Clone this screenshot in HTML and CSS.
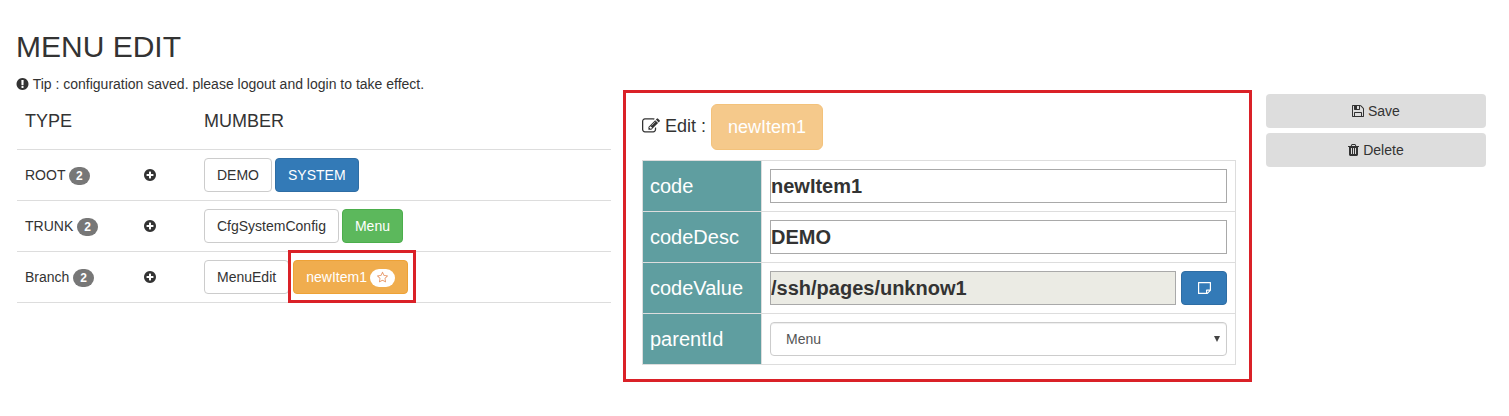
FILE: index.html
```html
<!DOCTYPE html>
<html lang="en">
<head>
<meta charset="utf-8">
<title>Menu Edit</title>
<link rel="stylesheet" href="styles.css">
</head>
<body>
<svg class="sprite" aria-hidden="true">
  <symbol id="alert" viewBox="128 0 1536 1792"><path d="M896 128q209 0 385.500 103t279.500 279.500 103 385.500-103 385.500-279.500 279.500-385.500 103-385.500-103-279.500-279.500-103-385.500 103-385.500 279.500-279.500 385.500-103zm128 1247v-190q0-14-9-23.500t-22-9.500h-192q-13 0-23 10t-10 23v190q0 13 10 23t23 10h192q13 0 22-9.500t9-23.500zm-2-344l18-621q0-12-10-18-10-8-24-8h-220q-14 0-24 8-10 6-10 18l17 621q0 10 10 17.500t24 7.500h185q14 0 23.500-7.500t10.500-17.500z"/></symbol>
  <symbol id="plus" viewBox="128 0 1536 1792"><path d="M1344 960v-128q0-26-19-45t-45-19h-256v-256q0-26-19-45t-45-19h-128q-26 0-45 19t-19 45v256h-256q-26 0-45 19t-19 45v128q0 26 19 45t45 19h256v256q0 26 19 45t45 19h128q26 0 45-19t19-45v-256h256q26 0 45-19t19-45zm320-64q0 209-103 385.500t-279.500 279.500-385.500 103-385.500-103-279.500-279.500-103-385.500 103-385.500 279.500-279.500 385.500-103 385.500 103 279.500 279.500 103 385.500z"/></symbol>
  <symbol id="edit" viewBox="0 0 1792 1792"><path d="M888 1184l116-116-152-152-116 116v56h96v96h56zm440-720q-16-16-33 1l-350 350q-17 17-1 33t33-1l350-350q17-17 1-33zm80 594v190q0 119-84.500 203.500t-203.500 84.500h-832q-119 0-203.500-84.500t-84.500-203.500v-832q0-119 84.500-203.500t203.500-84.500h832q63 0 117 25 15 7 18 23 3 17-9 29l-49 49q-14 14-32 8-23-6-45-6h-832q-66 0-113 47t-47 113v832q0 66 47 113t113 47h832q66 0 113-47t47-113v-126q0-13 9-22l64-64q15-15 35-7t20 29zm-96-738l288 288-672 672h-288v-288zm444 132l-92 92-288-288 92-92q28-28 68-28t68 28l152 152q28 28 28 68t-28 68z"/></symbol>
  <symbol id="save" viewBox="128 0 1536 1792"><path d="M512 1536h768v-384h-768v384zm896 0h128v-896q0-14-10-38.500t-20-34.500l-281-281q-10-10-34-20t-39-10v416q0 40-28 68t-68 28h-576q-40 0-68-28t-28-68v-416h-128v1280h128v-416q0-40 28-68t68-28h832q40 0 68 28t28 68v416zm-384-928v-320q0-13-9.500-22.500t-22.500-9.500h-192q-13 0-22.500 9.500t-9.500 22.500v320q0 13 9.500 22.500t22.500 9.500h192q13 0 22.500-9.500t9.500-22.500zm640 32v928q0 40-28 68t-68 28h-1344q-40 0-68-28t-28-68v-1344q0-40 28-68t68-28h928q40 0 88 20t76 48l280 280q28 28 48 76t20 88z"/></symbol>
  <symbol id="trash" viewBox="192 0 1408 1792"><path d="M704 1376v-704q0-14-9-23t-23-9h-64q-14 0-23 9t-9 23v704q0 14 9 23t23 9h64q14 0 23-9t9-23zm256 0v-704q0-14-9-23t-23-9h-64q-14 0-23 9t-9 23v704q0 14 9 23t23 9h64q14 0 23-9t9-23zm256 0v-704q0-14-9-23t-23-9h-64q-14 0-23 9t-9 23v704q0 14 9 23t23 9h64q14 0 23-9t9-23zm-544-992h448l-48-117q-7-9-17-11h-317q-10 2-17 11zm928 32v64q0 14-9 23t-23 9h-96v948q0 83-47 143.500t-113 60.500h-832q-66 0-113-58.500t-47-141.500v-952h-96q-14 0-23-9t-9-23v-64q0-14 9-23t23-9h309l70-167q15-37 54-63t79-26h320q40 0 79 26t54 63l70 167h309q14 0 23 9t9 23z"/></symbol>
  <symbol id="star" viewBox="64 0 1664 1792"><path d="M1201 1004l306-297-422-62-189-382-189 382-422 62 306 297-73 421 378-199 377 199zm527-357q0 22-26 48l-363 354 86 500q1 7 1 20 0 50-41 50-19 0-40-12l-449-236-449 236q-22 12-40 12-21 0-31.500-14.500t-10.500-35.500q0-6 2-20l86-500-364-354q-25-27-25-48 0-37 56-46l502-73 225-455q19-41 49-41t49 41l225 455 502 73q56 9 56 46z"/></symbol>
  <symbol id="note" viewBox="0 0 13 12"><path fill-rule="evenodd" d="M.5 0h12q.5 0 .5.500v8L9.500 12h-9q-.5 0-.5-.5v-11q0-.5.500-.5zM1.200 1.200v9.600H8V8.200q0-.7.700-.7h3.100V1.200zM9.200 8.700v2l2-2z"/></symbol>
</svg>
<div class="page">
  <section class="menus">
    <h2 class="title">MENU EDIT</h2>
    <p class="tip"><svg class="icon alert"><use href="#alert"/></svg> Tip : configuration saved. please logout and login to take effect.</p>
    <div class="row head"><div>TYPE</div><div></div><div>MUMBER</div></div>
    <div class="row">
      <div>ROOT <span class="badge">2</span></div>
      <div><svg class="icon"><use href="#plus"/></svg></div>
      <div class="members"><button class="btn">DEMO</button><button class="btn primary">SYSTEM</button></div>
    </div>
    <div class="row">
      <div>TRUNK <span class="badge">2</span></div>
      <div><svg class="icon"><use href="#plus"/></svg></div>
      <div class="members"><button class="btn">CfgSystemConfig</button><button class="btn success">Menu</button></div>
    </div>
    <div class="row last">
      <div>Branch <span class="badge">2</span></div>
      <div><svg class="icon"><use href="#plus"/></svg></div>
      <div class="members"><button class="btn">MenuEdit</button><span class="marked"><button class="btn warning">newItem1<span class="badge light"><svg class="icon star"><use href="#star"/></svg></span></button></span></div>
    </div>
  </section>
  <section class="editor">
    <div class="heading"><svg class="icon wide"><use href="#edit"/></svg> Edit : <button class="btn warning large">newItem1</button></div>
    <div class="form">
      <label class="label" for="code">code</label>
      <div class="field"><input class="input" id="code" value="newItem1"></div>
      <label class="label" for="desc">codeDesc</label>
      <div class="field"><input class="input" id="desc" value="DEMO"></div>
      <label class="label" for="value">codeValue</label>
      <div class="field"><input class="input readonly" id="value" value="/ssh/pages/unknow1" readonly><button class="btn primary pick" aria-label="Choose page"><svg class="note"><use href="#note"/></svg></button></div>
      <div class="label">parentId</div>
      <div class="field"><div class="select">Menu<svg class="caret" viewBox="0 0 6 6"><path d="M0 0h6L3 6z"/></svg></div></div>
    </div>
  </section>
  <aside class="actions">
    <button class="action"><svg class="icon"><use href="#save"/></svg> Save</button>
    <button class="action"><svg class="icon trash"><use href="#trash"/></svg> Delete</button>
  </aside>
</div>
</body>
</html>
```
FILE: styles.css
```css
*, *::before, *::after { box-sizing: border-box; }
body {
  margin: 0;
  background: #fff;
  color: #333;
  font: 14px/20px "Liberation Sans", Arial, sans-serif;
}
button, input { font-family: inherit; }
.sprite { display: none; }
.icon {
  display: inline-block;
  width: 12px;
  height: 14px;
  fill: currentColor;
  vertical-align: -2px;
}
.page {
  display: grid;
  grid-template-columns: 594px 629px 222px;
  column-gap: 12px;
  align-items: start;
  height: 416px;
  padding-left: 17px;
}
.page > .actions { margin-left: 2px; }

.title { margin: 30px 0 11px -1px; font-size: 30px; line-height: 33px; font-weight: 400; }
.tip { margin: 0 0 0 -1px; height: 27px; }
.icon.alert { width: 13px; }
.row {
  display: grid;
  grid-template-columns: 119px 60px 1fr;
  align-items: center;
  height: 51px;
  border-top: 1px solid #ddd;
}
.row > div { padding: 0 8px; white-space: nowrap; }
.row > .members { display: flex; gap: 3px; }
.row.head { height: 48px; border-top: 0; font-size: 18px; padding-bottom: 9px; }
.row.last { height: 52px; border-bottom: 1px solid #ddd; }
.row.last > .members { gap: 4px; }

.badge {
  display: inline-block;
  padding: 3px 7px;
  border-radius: 10px;
  background: #777;
  color: #fff;
  font-size: 12px;
  line-height: 12px;
  font-weight: 700;
  vertical-align: baseline;
}
.badge.light { background: #fff; height: 18px; padding: 2px 7px; margin-left: 3px; vertical-align: middle; }
.icon.star { width: 11px; height: 13px; fill: #e8996b; vertical-align: top; }
.btn {
  height: 34px;
  padding: 6px 12px;
  border: 1px solid #ccc;
  border-radius: 4px;
  background: #fff;
  color: #333;
  font-size: 14px;
  line-height: 20px;
  vertical-align: middle;
}
.btn.primary { background: #337ab7; border-color: #2e6da4; color: #fff; }
.btn.success { background: #5cb85c; border-color: #4cae4c; color: #fff; }
.btn.warning { background: #f0ad4e; border-color: #eea236; color: #fff; }
.btn.large {
  height: 46px;
  padding: 10px 16px;
  border-radius: 6px;
  font-size: 18px;
  line-height: 24px;
  opacity: .65;
}
.marked { position: relative; }
.marked .btn { display: block; width: 115px; padding: 6px 11px; }
.marked::after {
  content: "";
  position: absolute;
  left: -5px;
  right: -8px;
  top: -10px;
  height: 53px;
  border: 3px solid #da2128;
  pointer-events: none;
}

.editor {
  margin-top: 90px;
  height: 292px;
  padding: 10px 13px 0 16px;
  border: 3px solid #da2128;
}
.heading { height: 57px; font-size: 18px; line-height: 46px; white-space: nowrap; }
.icon.wide { width: 18px; height: 18px; vertical-align: -3px; }
.form {
  display: grid;
  grid-template-columns: 118px 1fr;
  gap: 1px;
  padding: 1px;
  background: #ddd;
}
.label {
  height: 50px;
  padding: 0 7px;
  background: #5f9ea0;
  color: #fff;
  font-size: 20px;
  line-height: 50px;
}
.field { display: flex; gap: 5px; padding: 8px; background: #fff; }
.input {
  flex: 1;
  min-width: 0;
  height: 34px;
  padding: 1px 1px 1px 0;
  border: 1px solid #a9a9a9;
  color: #333;
  font-size: 20px;
  font-weight: 700;
}
.input.readonly { background: #ebebe4; }
.pick { display: flex; align-items: center; justify-content: center; width: 46px; padding: 0; }
.note { width: 13px; height: 12px; fill: #fff; }
.select {
  display: flex;
  flex: 1;
  align-items: center;
  justify-content: space-between;
  height: 34px;
  padding: 0 6px 0 15px;
  border: 1px solid #ccc;
  border-radius: 4px;
  box-shadow: inset 0 1px 1px rgba(0, 0, 0, .075);
  color: #555;
}
.caret { width: 6px; height: 6px; fill: #444; }

.actions { display: grid; gap: 5px; padding-top: 94px; }
.action {
  height: 34px;
  padding: 0;
  border: 0;
  border-radius: 4px;
  background: #ddd;
  color: #333;
  font-size: 14px;
  line-height: 20px;
}
.icon.trash { width: 11px; }
```
